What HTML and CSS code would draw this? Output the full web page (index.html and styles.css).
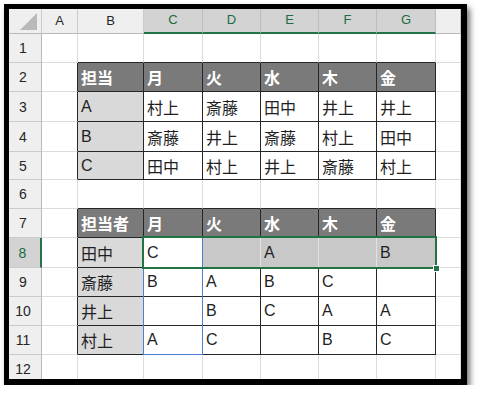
FILE: index.html
```html
<!DOCTYPE html>
<html lang="ja">
<head>
<meta charset="utf-8">
<link rel="stylesheet" href="styles.css">
</head>
<body>
<div class="frame">
  <div class="sheet">
    <!-- column headers -->
    <div class="c ch corner"><span class="tri"></span></div>
    <div class="c ch">A</div>
    <div class="c ch">B</div>
    <div class="c ch sel">C</div>
    <div class="c ch sel">D</div>
    <div class="c ch sel">E</div>
    <div class="c ch sel">F</div>
    <div class="c ch sel">G</div>
    <div class="c ch"></div>

    <!-- row 1 -->
    <div class="c rh">1</div>
    <div class="c"></div>
    <div class="c eb"></div>
    <div class="c eb"></div>
    <div class="c eb"></div>
    <div class="c eb"></div>
    <div class="c eb"></div>
    <div class="c eb"></div>
    <div class="c"></div>

    <!-- row 2 -->
    <div class="c rh">2</div>
    <div class="c er"></div>
    <div class="c t th">担当</div>
    <div class="c t th">月</div>
    <div class="c t th">火</div>
    <div class="c t th">水</div>
    <div class="c t th">木</div>
    <div class="c t th">金</div>
    <div class="c"></div>

    <!-- row 3 -->
    <div class="c rh">3</div>
    <div class="c er"></div>
    <div class="c t tk">A</div>
    <div class="c t">村上</div>
    <div class="c t">斎藤</div>
    <div class="c t">田中</div>
    <div class="c t">井上</div>
    <div class="c t">井上</div>
    <div class="c"></div>

    <!-- row 4 -->
    <div class="c rh">4</div>
    <div class="c er"></div>
    <div class="c t tk">B</div>
    <div class="c t">斎藤</div>
    <div class="c t">井上</div>
    <div class="c t">斎藤</div>
    <div class="c t">村上</div>
    <div class="c t">田中</div>
    <div class="c"></div>

    <!-- row 5 -->
    <div class="c rh">5</div>
    <div class="c er"></div>
    <div class="c t tk">C</div>
    <div class="c t">田中</div>
    <div class="c t">村上</div>
    <div class="c t">井上</div>
    <div class="c t">斎藤</div>
    <div class="c t">村上</div>
    <div class="c"></div>

    <!-- row 6 -->
    <div class="c rh">6</div>
    <div class="c"></div>
    <div class="c eb"></div>
    <div class="c eb"></div>
    <div class="c eb"></div>
    <div class="c eb"></div>
    <div class="c eb"></div>
    <div class="c eb"></div>
    <div class="c"></div>

    <!-- row 7 -->
    <div class="c rh">7</div>
    <div class="c er"></div>
    <div class="c t th">担当者</div>
    <div class="c t th">月</div>
    <div class="c t th">火</div>
    <div class="c t th">水</div>
    <div class="c t th">木</div>
    <div class="c t th">金</div>
    <div class="c"></div>

    <!-- row 8 -->
    <div class="c rh sel">8</div>
    <div class="c er"></div>
    <div class="c t tk">田中</div>
    <div class="c t">C</div>
    <div class="c t hl soft"></div>
    <div class="c t hl soft">A</div>
    <div class="c t hl soft"></div>
    <div class="c t hl">B</div>
    <div class="c"></div>

    <!-- row 9 -->
    <div class="c rh">9</div>
    <div class="c er"></div>
    <div class="c t tk">斎藤</div>
    <div class="c t">B</div>
    <div class="c t">A</div>
    <div class="c t">B</div>
    <div class="c t">C</div>
    <div class="c t"></div>
    <div class="c"></div>

    <!-- row 10 -->
    <div class="c rh">10</div>
    <div class="c er"></div>
    <div class="c t tk">井上</div>
    <div class="c t"></div>
    <div class="c t">B</div>
    <div class="c t">C</div>
    <div class="c t">A</div>
    <div class="c t">A</div>
    <div class="c"></div>

    <!-- row 11 -->
    <div class="c rh">11</div>
    <div class="c er"></div>
    <div class="c t tk">村上</div>
    <div class="c t">A</div>
    <div class="c t">C</div>
    <div class="c t"></div>
    <div class="c t">B</div>
    <div class="c t">C</div>
    <div class="c"></div>

    <!-- row 12 -->
    <div class="c rh">12</div>
    <div class="c"></div>
    <div class="c"></div>
    <div class="c"></div>
    <div class="c"></div>
    <div class="c"></div>
    <div class="c"></div>
    <div class="c"></div>
    <div class="c"></div>

    <!-- overlays -->
    <div class="copy-range"></div>
    <div class="selection"></div>
    <div class="fill-handle"></div>
  </div>
</div>
</body>
</html>
```

FILE: styles.css
```css
html, body {
  margin: 0;
  padding: 0;
  background: #ffffff;
}

.frame {
  margin: 4px 0 0 4px;
  width: 452px;
  height: 370px;
  border-style: solid;
  border-color: #000000;
  border-width: 5px 6px 6px 5px;
  overflow: hidden;
  box-shadow: 3px 4px 6px rgba(0, 0, 0, 0.55);
  background: #ffffff;
}

.sheet {
  position: relative;
  display: grid;
  grid-template-columns: 33px 36px 66px 59px 58px 58px 58px 59px 25px;
  grid-template-rows: 25px 29px 29px 30px 30px 28px 29px 29px 30px 29px 29px 29px 29px;
  font-family: "Liberation Sans", "Noto Sans CJK JP", sans-serif;
  font-size: 16px;
  color: #1f1f1f;
}

.c {
  box-sizing: border-box;
  display: flex;
  align-items: center;
  padding-left: 3px;
  border-right: 1px solid #dcdcdc;
  border-bottom: 1px solid #dcdcdc;
  white-space: nowrap;
  overflow: hidden;
}

/* headers */
.ch {
  background: #efefef;
  justify-content: center;
  padding: 0 0 2px 0;
  font-size: 13px;
  color: #262626;
  border-right-color: #cacaca;
  border-bottom-color: #b9b9b9;
}

.ch.sel {
  background: #d3d3d3;
  color: #1d6b40;
  border-right-color: #bdbdbd;
  border-bottom: 2px solid #217346;
}

.corner {
  justify-content: flex-end;
  align-items: flex-end;
  padding: 0 4px 3px 0;
}

.tri {
  width: 0;
  height: 0;
  border-left: 17px solid transparent;
  border-bottom: 17px solid #b9b9b9;
}

.rh {
  background: #efefef;
  justify-content: center;
  padding: 0 4px 0 0;
  font-size: 14px;
  color: #262626;
  border-right-color: #b9b9b9;
  border-bottom-color: #cacaca;
}

.rh.sel {
  background: #d3d3d3;
  color: #1d6b40;
  border-right: 2px solid #217346;
}

/* table cells */
.t {
  border-right-color: #262626;
  border-bottom-color: #262626;
}

.eb {
  border-bottom-color: #262626;
}

.er {
  border-right-color: #262626;
}

.th {
  background: #7a7a7a;
  color: #ffffff;
  font-weight: bold;
}

.tk {
  background: #d9d9d9;
}

.hl {
  background: #c8c8c8;
}

.hl.soft {
  border-right-color: #e2e2e2;
}

/* overlays */
.copy-range {
  position: absolute;
  left: 134px;
  top: 228px;
  width: 60px;
  height: 118px;
  box-sizing: border-box;
  border: 1px solid #4f7fd4;
}

.selection {
  position: absolute;
  left: 133px;
  top: 227px;
  width: 295px;
  height: 33px;
  box-sizing: border-box;
  border: 2px solid #217346;
}

.fill-handle {
  position: absolute;
  left: 424px;
  top: 256px;
  width: 5px;
  height: 5px;
  background: #217346;
  border: 1px solid #ffffff;
}
```
